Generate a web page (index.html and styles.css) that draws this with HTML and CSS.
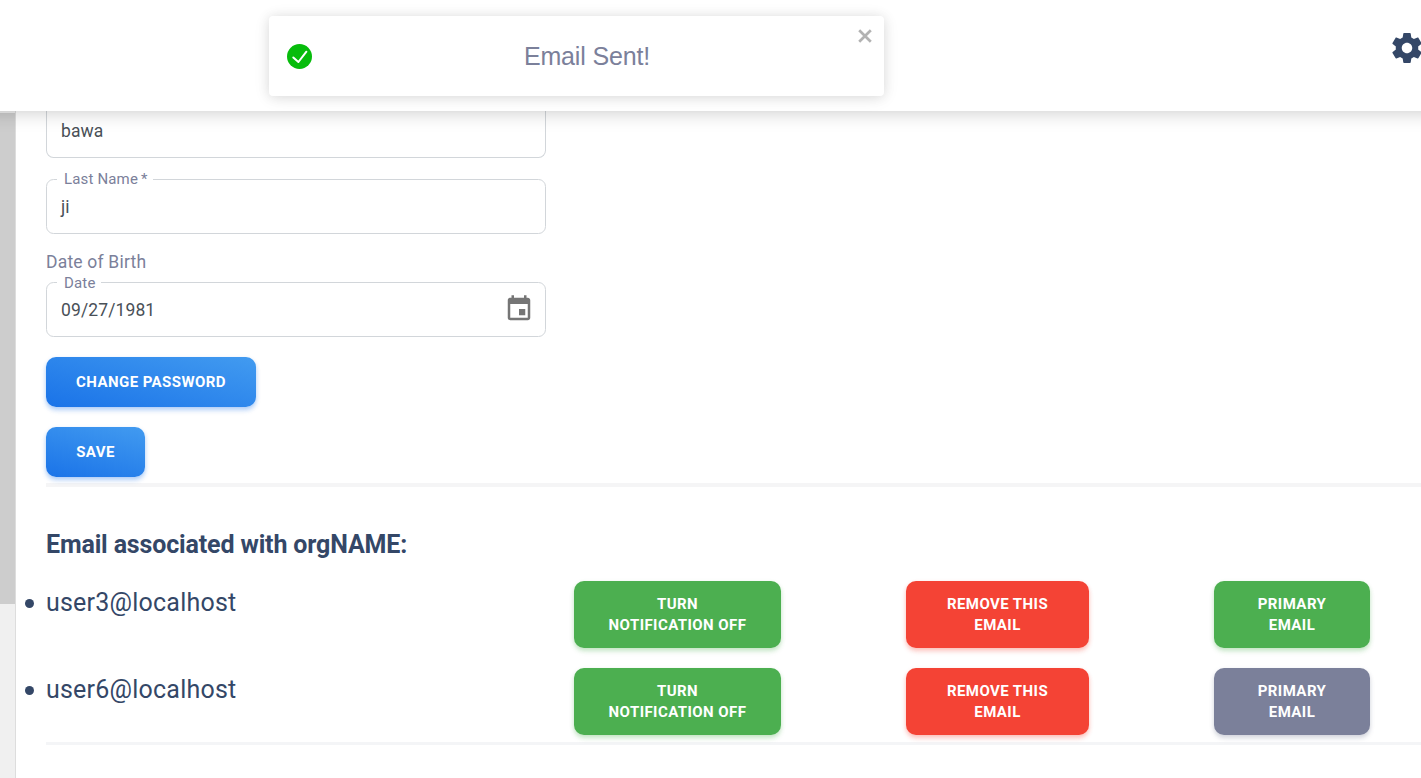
FILE: index.html
```html
<!DOCTYPE html>
<html lang="en">
<head>
<meta charset="utf-8">
<title>Profile</title>
<link rel="stylesheet" href="styles.css">
</head>
<body>
<header class="topbar">
  <svg class="gear" viewBox="0 0 24 24"><path d="M19.43 12.98c.04-.32.07-.64.07-.98s-.03-.66-.07-.98l2.11-1.65c.19-.15.24-.42.12-.64l-2-3.46c-.12-.22-.39-.3-.61-.22l-2.49 1c-.52-.4-1.08-.73-1.69-.98l-.38-2.65C14.46 2.18 14.25 2 14 2h-4c-.25 0-.46.18-.49.42l-.38 2.65c-.61.25-1.17.59-1.69.98l-2.49-1c-.23-.09-.49 0-.61.22l-2 3.46c-.13.22-.07.49.12.64l2.11 1.65c-.04.32-.07.65-.07.98s.03.66.07.98l-2.11 1.65c-.19.15-.24.42-.12.64l2 3.46c.12.22.39.3.61.22l2.49-1c.52.4 1.08.73 1.69.98l.38 2.65c.03.24.24.42.49.42h4c.25 0 .46-.18.49-.42l.38-2.65c.61-.25 1.17-.59 1.69-.98l2.49 1c.23.09.49 0 .61-.22l2-3.46c.12-.22.07-.49-.12-.64l-2.11-1.65zM12 15.5c-1.93 0-3.5-1.57-3.5-3.5s1.57-3.500 3.500-3.500 3.500 1.570 3.500 3.500-1.570 3.500-3.500 3.500z"/></svg>
</header>
<div class="toast">
  <svg class="toast-icon" viewBox="0 0 25 25"><circle cx="12.500" cy="12.500" r="12.500"/><path d="M6.300 13.500l5.100 4.500 8-10.300"/></svg>
  <span class="toast-text">Email Sent!</span>
  <svg class="toast-close" viewBox="0 0 14 14"><path d="M1.200 1.200l11.600 11.600M12.800 1.200L1.200 12.800"/></svg>
</div>
<div class="page">
  <div class="scrollbar"><div class="thumb"></div></div>
  <main class="content">
    <form class="form">
      <div class="field field-cut"><span class="value">bawa</span></div>
      <div class="field field-last"><span class="label">Last Name<span class="star">*</span></span><span class="value">ji</span></div>
      <div class="caption">Date of Birth</div>
      <div class="field field-date"><span class="label">Date</span><span class="value">09/27/1981</span>
        <svg class="calendar" viewBox="0 0 24 24"><path d="M17 12h-5v5h5v-5zM16 1v2H8V1H6v2H5c-1.110 0-1.990.9-1.990 2L3 19c0 1.100.89 2 2 2h14c1.100 0 2-.9 2-2V5c0-1.100-.9-2-2-2h-1V1h-2zm3 18H5V8h14v11z"/></svg>
      </div>
      <button type="button" class="btn btn-blue btn-password">Change Password</button>
      <button type="button" class="btn btn-blue btn-save">Save</button>
    </form>
    <section class="emails">
      <h2 class="heading">Email associated with orgNAME:</h2>
      <ul class="list">
        <li class="row">
          <span class="address">user3@localhost</span>
          <button class="btn btn-green">Turn<br>Notification off</button>
          <button class="btn btn-red">Remove this<br>email</button>
          <button class="btn btn-green">Primary<br>email</button>
        </li>
        <li class="row">
          <span class="address">user6@localhost</span>
          <button class="btn btn-green">Turn<br>Notification off</button>
          <button class="btn btn-red">Remove this<br>email</button>
          <button class="btn btn-grey">Primary<br>email</button>
        </li>
      </ul>
    </section>
  </main>
</div>
</body>
</html>
```
FILE: styles.css
```css
* { box-sizing: border-box; }
body {
  margin: 0;
  height: 778px;
  overflow: hidden;
  display: flex;
  flex-direction: column;
  background: #fff;
  color: #344767;
  font-family: Roboto, sans-serif;
}
.topbar {
  position: relative;
  z-index: 2;
  flex: none;
  height: 111px;
  background: #fff;
  box-shadow: 0 -20px 19px 20px rgba(0, 0, 0, .23);
  display: flex;
  justify-content: flex-end;
}
.gear { width: 36px; height: 36px; margin: 30px -3.500px 0 0; fill: #344767; }
.toast {
  position: absolute;
  z-index: 3;
  left: 269px;
  top: 16px;
  width: 615px;
  height: 80px;
  padding: 0 18px;
  display: flex;
  align-items: center;
  background: #fff;
  border-radius: 4px;
  box-shadow: 0 1px 12px rgba(0, 0, 0, .1), 0 2px 18px rgba(0, 0, 0, .07);
}
.toast-icon { width: 25px; height: 25px; fill: #07bc0c; }
.toast-icon path { fill: none; stroke: #fff; stroke-width: 2; stroke-linecap: round; stroke-linejoin: round; }
.toast-text {
  flex: 1;
  text-align: center;
  font: 25px/30px "Liberation Sans", sans-serif;
  letter-spacing: -.15px;
  color: #7b809a;
  padding-right: 4px;
}
.toast-close { position: absolute; right: 12px; top: 13px; width: 14px; height: 14px; stroke: #b2b2b2; stroke-width: 2.7; }
.page { flex: 1; display: flex; min-height: 0; }
.scrollbar { flex: none; width: 16px; padding-top: 2px; background: #f0f0f0; border-right: 1px solid #ddd; }
.thumb { height: 491px; background: #cdcdcd; }
.content { flex: 1; padding-left: 30px; }
.form {
  height: 376px;
  border-bottom: 4px solid #f5f5f6;
  display: flex;
  flex-direction: column;
  align-items: flex-start;
}
.field {
  position: relative;
  flex: none;
  width: 500px;
  height: 55px;
  border: 1px solid #d2d6da;
  border-radius: 7.500px;
  padding: 0 13px 0 14px;
  display: flex;
  align-items: center;
  justify-content: space-between;
}
.field-cut { height: 47px; border-top: 0; border-radius: 0 0 7.500px 7.500px; padding-bottom: 6px; }
.field-last { margin-top: 21px; }
.label {
  position: absolute;
  left: 10px;
  top: -11px;
  padding: 0 5px 0 7px;
  background: #fff;
  color: #7b809a;
  font-size: 15px;
  line-height: 20px;
  letter-spacing: .16px;
}
.field-date .label { top: -10px; }
.star { margin-left: 3px; }
.value { font-size: 17.500px; line-height: 24px; letter-spacing: .12px; color: #495057; }
.caption { margin-top: 16px; height: 24px; font-size: 17.500px; line-height: 24px; letter-spacing: .2px; color: #7b809a; }
.field-date { margin-top: 8px; }
.calendar { width: 30px; height: 30px; fill: #757575; margin: -2px -2px 0 0; }
.btn {
  border: 0;
  border-radius: 10px;
  color: #fff;
  font: 700 15px/21px Roboto, sans-serif;
  letter-spacing: .43px;
  text-transform: uppercase;
  text-align: center;
  padding: 0;
}
.btn-blue {
  flex: none;
  height: 50px;
  margin-top: 20px;
  background: linear-gradient(195deg, #429bf0, #1a73e8);
  box-shadow: 0 4px 5px rgba(26, 115, 232, .15), 0 2px 4px rgba(26, 115, 232, .25);
}
.btn-password { width: 210px; }
.btn-save { width: 99px; }
.emails { height: 258px; border-bottom: 3px solid #f4f5f7; padding-top: 41px; }
.heading { margin: 0; font-size: 25px; line-height: 34px; font-weight: 700; letter-spacing: -.15px; }
.list { list-style: none; margin: 19px 0 0; padding: 0; display: flex; flex-direction: column; gap: 20px; }
.row { display: flex; height: 67px; }
.row .btn { flex: none; width: 207px; }
.row .btn-red { width: 183px; margin-left: 125px; }
.row .btn:last-child { width: 156px; margin-left: 125px; }
.btn-green { background: #4caf50; box-shadow: 0 4px 5px rgba(76, 175, 80, .13), 0 2px 4px rgba(76, 175, 80, .25); }
.btn-red { background: #f44335; box-shadow: 0 4px 5px rgba(244, 67, 53, .13), 0 2px 4px rgba(244, 67, 53, .25); }
.btn-grey { background: #7b809a; box-shadow: 0 4px 5px rgba(123, 128, 154, .13), 0 2px 4px rgba(123, 128, 154, .25); }
.address { flex: none; width: 528px; font-size: 25px; line-height: 43px; letter-spacing: .22px; }
.address::before {
  content: "";
  display: inline-block;
  width: 9px;
  height: 9px;
  margin: 0 12.500px 3px -21.500px;
  border-radius: 50%;
  background: #344767;
}
```
